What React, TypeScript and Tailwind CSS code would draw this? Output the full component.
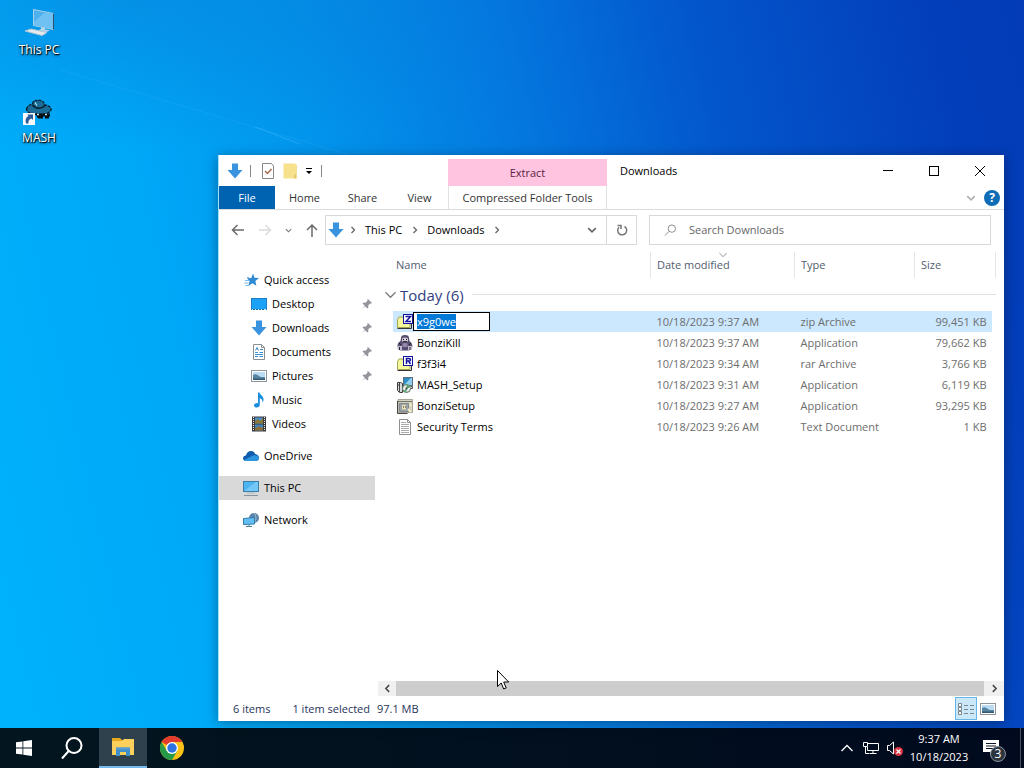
import React, { useEffect, useRef } from "react";

function DownArrow({ className = "h-4 w-4" }) {
  return (
    <svg viewBox="0 0 16 16" className={className}>
      <path d="M5 .5h6V7h4.500L8 15.500.5 7H5z" fill="#3a93de" />
    </svg>
  );
}

function Star() {
  return (
    <svg viewBox="0 0 16 16" className="h-4 w-4">
      <path d="M9 1.500l1.500 4.200 4.500.2-3.600 3 .9 4.900-3.800-2.600-4.200 2.900 1.300-4.900L3 6.300l4.300-.4z" fill="#2f8ad4" />
      <path d="M1 8.500h4.500M.5 11h4M1.500 13.500h3M3 5.500h2" stroke="#74bbee" />
    </svg>
  );
}

function DesktopIcon() {
  return (
    <svg viewBox="0 0 16 16" className="h-4 w-4">
      <rect x=".5" y="2.500" width="15" height="11" fill="#1ba1f6" stroke="#1f7fc6" />
      <path d="M1 13.500h14" stroke="#1466a8" />
      <path d="M1 13.500h1M4 13.500h1M7 13.500h1M10 13.500h1M13 13.500h2" stroke="#d8eefb" />
    </svg>
  );
}

function DocumentIcon() {
  return (
    <svg viewBox="0 0 16 16" className="h-4 w-4">
      <path d="M2.500.5h8l3 3v12h-11z" fill="#fff" stroke="#8a8f94" />
      <path d="M10.500.5v3h3" fill="none" stroke="#8a8f94" />
      <path d="M4.500 6.500l1.500-3 1.500 3M9 5.500h3M4 8.500h3M8.500 8.500h3.500M4 10.500h8M4 12.500h3M8.500 12.500h3.500" fill="none" stroke="#3b8ed0" />
    </svg>
  );
}

function PictureIcon() {
  return (
    <svg viewBox="0 0 16 16" className="h-4 w-4">
      <rect x=".5" y="2.500" width="15" height="11" fill="#fff" stroke="#8c9399" />
      <rect x="2" y="4" width="12" height="8" fill="#b9dcf2" />
      <path d="M2 7c2-1.500 4-.5 6 1s4 1 6 1v3H2z" fill="#5585a3" />
      <path d="M2 10.500h12V12H2z" fill="#35586f" />
    </svg>
  );
}

function MusicIcon() {
  return (
    <svg viewBox="0 0 16 16" className="h-4 w-4">
      <path d="M7 .5h1.500c.3 2.500 4.500 3.500 4 7.500-.1 1-.6 2-1.300 2.500.7-2.500-.7-3.700-2.400-4.300V13c0 1.500-1.300 2.500-3 2.500s-2.800-.8-2.800-2.100S4.500 11 6 11c.4 0 .7 0 1 .2z" fill="#1c8ee0" />
    </svg>
  );
}

function VideoIcon() {
  return (
    <svg viewBox="0 0 16 16" className="h-4 w-4">
      <path d="M1 .5h14v15H1z" fill="#3a3a3a" />
      <path d="M2.500 1v14M13.500 1v14" stroke="#eee" strokeDasharray="1 1" />
      <path d="M4 1.500h8v6H4z" fill="#4f8fd0" />
      <path d="M4 5l3-2 2 2 3-3v5.500H4z" fill="#8a7a35" />
      <path d="M4 8.500h8v6H4z" fill="#3f86c8" />
      <path d="M4 12l4-2 4 2v2.500H4z" fill="#8b6f3c" />
    </svg>
  );
}

function CloudIcon() {
  return (
    <svg viewBox="0 0 16 16" className="h-4 w-4">
      <path d="M3 7.500C3.500 4.500 5.500 3 8 3c2 0 3.500 1 4.200 3 2 .3 3.800 1.500 3.800 3.700 0 2-1.500 3.300-3.500 3.300h-9C1.500 13 0 12 0 10.300S1.300 7.600 3 7.500z" fill="#0f5cad" />
      <path d="M1 12l9-4.500c2.500-.8 6 .2 6 2.500 0 1.800-1.500 3-3.500 3h-9C2.300 13 1.500 12.700 1 12z" fill="#2b95e0" />
    </svg>
  );
}

function MonitorIcon() {
  return (
    <svg viewBox="0 0 16 16" className="h-4 w-4">
      <rect x=".5" y="1.500" width="15" height="10" fill="#4db4f2" stroke="#3c7ea8" />
      <path d="M1 11L13 2h2v9z" fill="#74c8f7" />
      <path d="M4 13h8" stroke="#a9b8c2" />
      <path d="M1 15.500h14" stroke="#87939b" />
    </svg>
  );
}

function NetworkIcon() {
  return (
    <svg viewBox="0 0 16 16" className="h-4 w-4">
      <circle cx="11" cy="6" r="5" fill="#5b84a8" />
      <path d="M11 1q4 5 0 10" stroke="#9dbdd6" fill="none" />
      <path d="M.5 6.500l11-1v6.500l-11 .5z" fill="#62bff2" stroke="#2f7cae" />
      <path d="M3 14.500h6M6 12.500v2" stroke="#4b7f9f" />
    </svg>
  );
}

function Pin() {
  return (
    <svg viewBox="0 0 12 12" className="h-3 w-3">
      <path d="M7 1l4 4-1 .8-.8-.2-2 2 .2 1.900-1 1L4 8.200.8 11.200 3.800 7.800 1.500 5.500l1-1 2 .2 2-2L6.200 1.800z" fill="#92969b" />
    </svg>
  );
}

function Chevron({ dir = "right", className = "h-2 w-2 text-[#666]" }) {
  const paths = { right: "M2.500 1l3 3-3 3", left: "M5.500 1l-3 3 3 3", down: "M1 2.500l3 3 3-3", up: "M1 5.500l3-3 3 3" };
  return (
    <svg viewBox="0 0 8 8" className={className} fill="none" stroke="currentColor" strokeWidth="1.300">
      <path d={paths[dir]} />
    </svg>
  );
}

function ThinChevron({ dir = "down", className }) {
  return (
    <svg viewBox="0 0 12 8" className={className} fill="none" stroke="currentColor" strokeWidth="1.300">
      <path d={dir === "down" ? "M.5 1L6 6.500 11.500 1" : "M.5 7L6 1.500 11.500 7"} />
    </svg>
  );
}

function ArchiveIcon({ kind }) {
  return (
    <svg viewBox="0 0 16 16" className="h-4 w-4">
      <path d="M.5 5.500L2 3h4l1 1.500h6V13.500H.5z" fill="#f4f79a" stroke="#a3a455" />
      <path d="M.5 14.500h14V10" fill="none" stroke="#333" />
      <rect x="6.500" y=".5" width="9" height="9" fill="#fff" stroke="#1414a0" />
      <path
        d={kind === "zip" ? "M8.500 2.500h5L9 7.500h5" : "M9.500 8V2.500h2.500q1.500 0 1.500 1.200T12 5H9.500M11.500 5l2 3"}
        fill="none"
        stroke="#1414a0"
        strokeWidth="1.500"
      />
    </svg>
  );
}

function GorillaIcon() {
  return (
    <svg viewBox="0 0 16 16" className="h-4 w-4">
      <path d="M4 3q0-3 4-3t4 3l.5 3q3 2 3 5l-1 3.500-3 1H4l-3-1L.5 11q0-3.500 3-5z" fill="#564c6e" />
      <path d="M5 3.500q3-2 6 0v3H5z" fill="#d2ccdc" />
      <path d="M6 4h1v1H6zM9 4h1v1H9zM6 6h4v.7H6z" fill="#111" />
      <path d="M5.500 8.500q2.500-1 5 0V12h-5z" fill="#9589ad" />
      <path d="M1 11h4v4H1zM11 11h4v4h-4z" fill="#c3bbd0" />
      <path d="M2.500 12v3M13 12v3M2 8l2 2M14 8l-2 2" stroke="#2b2438" />
    </svg>
  );
}

function SetupIcon() {
  return (
    <svg viewBox="0 0 16 16" className="h-4 w-4">
      <rect x="6.500" y=".5" width="9" height="8" fill="#8ed0ef" stroke="#5c6e80" />
      <path d="M7 8l7-7H7z" fill="#2f8fc4" />
      <path d="M.5 5.500h3l2 1v9h-3l-2-2z" fill="#d7dadb" stroke="#3c3c3c" />
      <path d="M2.500 6v9M1 8h1" stroke="#444" />
      <circle cx="9.500" cy="11.500" r="4" fill="#e6efe9" stroke="#55705c" />
      <path d="M9.500 7.500a4 4 0 0 1 3.500 3l-3.500 1zM9.500 11.500l-3 2.500 3 1.500z" fill="#57a26d" />
      <circle cx="9.500" cy="11.500" r="1" fill="#333" />
      <path d="M13.500 9.500h2v2h-2" stroke="#555" fill="#ccc" />
    </svg>
  );
}

function BonziSetupIcon() {
  return (
    <svg viewBox="0 0 16 16" className="h-4 w-4">
      <path d="M1 1.500h14.500v13H1z" fill="#d3d1bf" stroke="#a5a496" />
      <path d="M1 3.500h14" stroke="#77776a" />
      <path d="M.5 3v12.500h10" fill="none" stroke="#444" />
      <path d="M2.500 5.500h9v8h-9z" fill="#99a2ab" stroke="#84888f" />
      <path d="M5 7.500q2-2 4 0v4H5z" fill="#e8e0b0" />
      <path d="M6 9h1M8 9h1" stroke="#333" />
      <path d="M11 11l3 3M12.500 6l2 2" stroke="#f1edc0" strokeWidth="2" />
    </svg>
  );
}

function TextIcon() {
  return (
    <svg viewBox="0 0 16 16" className="h-4 w-4">
      <path d="M2.500.5h8l3 3v12h-11z" fill="#fff" stroke="#8f8f8f" />
      <path d="M10.500.5v3h3" fill="none" stroke="#8f8f8f" />
      <path d="M4 3.500h5M4 5.500h8M4 7.500h8M4 9.500h8M4 11.500h8M4 13.500h8" stroke="#aaa" />
    </svg>
  );
}

const pinned = [
  { name: "Desktop", icon: <DesktopIcon />, pin: true },
  { name: "Downloads", icon: <DownArrow />, pin: true },
  { name: "Documents", icon: <DocumentIcon />, pin: true },
  { name: "Pictures", icon: <PictureIcon />, pin: true },
  { name: "Music", icon: <MusicIcon />, pin: false },
  { name: "Videos", icon: <VideoIcon />, pin: false },
];

const files = [
  { name: "x9g0we", date: "10/18/2023 9:37 AM", type: "zip Archive", size: "99,451 KB", icon: <ArchiveIcon kind="zip" />, selected: true },
  { name: "BonziKill", date: "10/18/2023 9:37 AM", type: "Application", size: "79,662 KB", icon: <GorillaIcon /> },
  { name: "f3f3i4", date: "10/18/2023 9:34 AM", type: "rar Archive", size: "3,766 KB", icon: <ArchiveIcon kind="rar" /> },
  { name: "MASH_Setup", date: "10/18/2023 9:31 AM", type: "Application", size: "6,119 KB", icon: <SetupIcon /> },
  { name: "BonziSetup", date: "10/18/2023 9:27 AM", type: "Application", size: "93,295 KB", icon: <BonziSetupIcon /> },
  { name: "Security Terms", date: "10/18/2023 9:26 AM", type: "Text Document", size: "1 KB", icon: <TextIcon /> },
];

function DesktopIcons() {
  return (
    <div className="flex w-[78px] flex-col gap-7 pt-2 text-[12px] text-white">
      <button className="flex h-[60px] flex-col items-center gap-1">
        <svg viewBox="0 0 32 30" className="h-[30px] w-8">
          <path d="M10.500 1.500l20 4v16l-20-4z" fill="#4fb0ee" stroke="#a9cfe6" />
          <path d="M11 14L22 4.200l8 1.700v15l-19-3.800z" fill="#6fc0f3" />
          <path d="M30.500 5.500v16" stroke="#2f5068" />
          <path d="M18 19l4 1v1.500l5 .8-4 2-8-1.800 3-1.500z" fill="#b5d6ea" />
          <path d="M2 23l6-2 16 3.500-5 3z" fill="#e4ebef" stroke="#b3c6d3" />
        </svg>
        <span className="[text-shadow:1px_1px_1px_#000,0_1px_3px_#000]">This PC</span>
      </button>
      <button className="flex h-[60px] flex-col items-center gap-1">
        <svg viewBox="0 0 32 30" className="h-[30px] w-8">
          <path d="M3.500 13c1-3 3-4 6-5 .5-3 3-4.500 5-3 1-1 3-1 4 0 2 .5 3 2 3 4 4 .5 7 2 6.500 5-1 3-6 4.500-12 4.500S3.500 17 3.500 13z" fill="#1b6c97" stroke="#071c2c" strokeWidth="1.300" strokeDasharray="3 1" />
          <path d="M9.500 9c3 4 9 4.500 12.500.5" fill="none" stroke="#071c2c" strokeWidth="1.500" />
          <path d="M12 17.500h15v3h-1v2h-4v-2h-2v2h-5z" fill="#0b0f14" />
          <path d="M12 6.500l2 3M14 18.500h2M22 18.500h2" stroke="#b6e4f4" strokeWidth="1.300" />
          <path d="M0 17h12v12H0z" fill="#f6f8fa" />
          <path d="M3 27.500c-1-4 0-6.500 2.500-7.500L4.500 18.500H10V24l-1.500-1.500C6 23.500 5 25 5.500 27.500z" fill="#2a5a98" />
        </svg>
        <span className="[text-shadow:1px_1px_1px_#000,0_1px_3px_#000]">MASH</span>
      </button>
    </div>
  );
}

function TitleBar() {
  return (
    <header className="shrink-0 border-b border-[#dadbdc]">
      <div className="flex h-[31px]">
        <div className="flex w-[229px] shrink-0 items-center pl-2">
          <DownArrow />
          <span className="ml-[7px] h-3 w-px bg-[#888]" />
          <button aria-label="Properties" className="ml-[10px]">
            <svg viewBox="0 0 14 16" className="h-4 w-[14px]">
              <path d="M1.500.5h9l2 2.500v12.500h-11z" fill="#fff" stroke="#888" />
              <path d="M4 8l2.500 2.500L10.500 6" fill="none" stroke="#a9694f" strokeWidth="1.500" />
            </svg>
          </button>
          <button aria-label="New folder" className="ml-2">
            <svg viewBox="0 0 14 16" className="h-4 w-[14px]">
              <path d="M.5.500h11l2 1v14H.5z" fill="#f8e18c" />
              <path d="M13 2v9l-2 1v3.500h2.500V2z" fill="#e7c96a" />
            </svg>
          </button>
          <button aria-label="Customize Quick Access Toolbar" className="ml-2">
            <svg viewBox="0 0 8 8" className="h-2 w-2">
              <path d="M1 1.500h6" stroke="#000" />
              <path d="M1 4h6L4 7z" />
            </svg>
          </button>
          <span className="ml-2 h-3 w-px bg-[#888]" />
        </div>
        <div className="mt-1 w-[159px] shrink-0 bg-[#ffc4e0] text-center leading-7 text-[#5b1f42]">Extract</div>
        <h1 className="flex-1 pl-[13px] leading-8 text-black">Downloads</h1>
        <div className="mr-px flex">
          <button aria-label="Minimize" className="flex w-[46px] items-center justify-center">
            <span className="h-px w-[10px] bg-black" />
          </button>
          <button aria-label="Maximize" className="flex w-[46px] items-center justify-center">
            <span className="h-[10px] w-[10px] border border-black" />
          </button>
          <button aria-label="Close" className="flex w-[46px] items-center justify-center">
            <svg viewBox="0 0 10 10" className="h-[10px] w-[10px]" stroke="#000">
              <path d="M0 0l10 10M10 0L0 10" />
            </svg>
          </button>
        </div>
      </div>
      <nav className="flex h-[23px] items-stretch text-[#333]">
        <button className="w-14 bg-[#0063b1] text-white">File</button>
        <button className="w-[59px]">Home</button>
        <button className="w-[57px]">Share</button>
        <button className="w-[57px]">View</button>
        <button className="w-[159px] border-x border-[#e4dfe2] whitespace-nowrap">Compressed Folder Tools</button>
        <div className="ml-auto flex items-center gap-2 pr-1">
          <Chevron dir="down" className="h-[10px] w-[10px] text-[#b0b0b0]" />
          <button aria-label="Help" className="h-4 w-4 rounded-full bg-[#0f6cb6] text-[12px] leading-4 font-bold text-white">?</button>
        </div>
      </nav>
    </header>
  );
}

function AddressBar() {
  return (
    <div className="flex shrink-0 items-center pt-[5px] pr-[13px] pl-3 text-black">
      <div className="flex w-[94px] items-center justify-between pr-[6px]">
        <button aria-label="Back">
          <svg viewBox="0 0 14 14" className="h-[14px] w-[14px]" fill="none" stroke="#6a6a6a" strokeWidth="1.500">
            <path d="M13 7H2M6.500 2L1.500 7l5 5" />
          </svg>
        </button>
        <button aria-label="Forward">
          <svg viewBox="0 0 14 14" className="h-[14px] w-[14px]" fill="none" stroke="#dcdcdc" strokeWidth="1.500">
            <path d="M1 7h11M7.500 2l5 5-5 5" />
          </svg>
        </button>
        <button aria-label="Recent locations">
          <Chevron dir="down" className="h-[7px] w-[7px] text-[#777]" />
        </button>
        <button aria-label="Up">
          <svg viewBox="0 0 14 14" className="h-[14px] w-[14px]" fill="none" stroke="#6a6a6a" strokeWidth="1.500">
            <path d="M7 14V2M2 7l5-5 5 5" />
          </svg>
        </button>
      </div>
      <div className="flex h-[30px] w-[312px] shrink-0 items-center border border-[#d9d9d9]">
        <span className="ml-[2px]"><DownArrow className="h-[18px] w-4" /></span>
        <span className="ml-[5px]"><Chevron /></span>
        <button className="ml-2">This PC</button>
        <span className="ml-[9px]"><Chevron /></span>
        <button className="ml-2">Downloads</button>
        <span className="ml-2"><Chevron /></span>
        <button aria-label="Previous locations" className="mr-[9px] ml-auto">
          <Chevron dir="down" className="h-[10px] w-[10px] text-[#666]" />
        </button>
        <button aria-label="Refresh" className="flex h-full w-[30px] items-center justify-center border-l border-[#d9d9d9]">
          <svg viewBox="0 0 12 12" className="h-3 w-3" fill="none" stroke="#777" strokeWidth="1.500">
            <path d="M8.500 2.500A4.500 4.500 0 1 1 3 3.200M1.500 1.500h3.500v3.500" />
          </svg>
        </button>
      </div>
      <label className="ml-3 flex h-[30px] flex-1 items-center border border-[#d9d9d9] pl-[14px]">
        <svg viewBox="0 0 14 14" className="mr-3 h-[14px] w-[14px]" fill="none" stroke="#888">
          <circle cx="8.500" cy="5.500" r="4" />
          <path d="M5.500 8.500L1 13" />
        </svg>
        <input aria-label="Search Downloads" placeholder="Search Downloads" className="w-full bg-transparent outline-none placeholder:text-[#666]" />
      </label>
    </div>
  );
}

function Sidebar() {
  return (
    <aside className="w-[156px] shrink-0 pt-4 text-black">
      <button className="flex h-6 w-full items-center gap-1 pl-[25px]"><Star />Quick access</button>
      {pinned.map((item) => (
        <button key={item.name} className="flex h-6 w-full items-center gap-[5px] pr-[2px] pl-8">
          {item.icon}
          {item.name}
          {item.pin && <span className="ml-auto"><Pin /></span>}
        </button>
      ))}
      <button className="mt-2 flex h-6 w-full items-center gap-[5px] pl-6"><CloudIcon />OneDrive</button>
      <button className="mt-2 flex h-6 w-full items-center gap-[5px] bg-[#d9d9d9] pl-6"><MonitorIcon />This PC</button>
      <button className="mt-2 flex h-6 w-full items-center gap-[5px] pl-6"><NetworkIcon />Network</button>
    </aside>
  );
}

function FileTable() {
  const rename = useRef<HTMLInputElement>(null);

  useEffect(() => {
    rename.current?.focus();
    rename.current?.select();
  }, []);

  return (
    <table className="w-full table-fixed border-collapse text-[#6d6d6d]">
      <colgroup>
        <col />
        <col className="w-36" />
        <col className="w-[120px]" />
        <col className="w-[77px]" />
        <col className="w-1" />
      </colgroup>
      <thead>
        <tr className="h-[26px] text-left text-[#53606e]">
          <th className="pl-[3px] font-normal">Name</th>
          <th className="relative border-l border-[#e5e5e5] pl-[6px] font-normal">
            <span className="absolute top-0 left-[68px]"><ThinChevron className="h-[6px] w-2 text-[#888]" /></span>
            Date modified
          </th>
          <th className="border-l border-[#e5e5e5] pl-[6px] font-normal">Type</th>
          <th colSpan={2} className="border-x border-[#e5e5e5] pl-[6px] font-normal">Size</th>
        </tr>
      </thead>
      <tbody>
        <tr className="h-[33px]">
          <td colSpan={5}>
            <button className="-ml-2 flex w-full items-center text-[15px] text-[#33417f]">
              <ThinChevron className="mr-1 h-2 w-[11px] text-[#777]" />
              Today (6)
              <span className="-mr-2 ml-2 h-px flex-1 bg-[#e2e2e2]" />
            </button>
          </td>
        </tr>
        {files.map((file) => (
          <tr key={file.name} className="h-[21px]">
            <td className={file.selected ? "bg-[#cce8ff] pl-1" : "pl-1"}>
              <div className="flex items-center">
                {file.icon}
                {file.selected ? (
                  <input
                    ref={rename}
                    aria-label="File name"
                    defaultValue={file.name}
                    className="h-[19px] w-[77px] border border-black bg-white pl-[3px] text-black caret-transparent outline-none selection:bg-[#0078d7] selection:text-white"
                  />
                ) : (
                  <span className="ml-1 text-black">{file.name}</span>
                )}
              </div>
            </td>
            <td className={file.selected ? "bg-[#cce8ff] pl-[6px]" : "pl-[6px]"}>{file.date}</td>
            <td className={file.selected ? "bg-[#cce8ff] pl-[6px]" : "pl-[6px]"}>{file.type}</td>
            <td className={file.selected ? "bg-[#cce8ff] pr-[5px] text-right" : "pr-[5px] text-right"}>{file.size}</td>
            <td />
          </tr>
        ))}
      </tbody>
    </table>
  );
}

function ExplorerWindow() {
  return (
    <main className="absolute top-[155px] right-5 bottom-[7px] left-[218px] flex flex-col border-l border-[#9fe3fb] bg-white shadow-[0_2px_12px_rgba(0,0,0,0.35)]">
      <TitleBar />
      <AddressBar />
      <div className="flex min-h-0 flex-1 pt-[7px]">
        <Sidebar />
        <section className="ml-[3px] flex min-w-0 flex-1 flex-col">
          <div className="flex-1 pr-2 pl-[15px]">
            <FileTable />
          </div>
          <div className="flex h-[15px] items-center bg-[#f0f0f0]">
            <button aria-label="Scroll left" className="flex w-[18px] justify-center">
              <Chevron dir="left" className="h-[9px] w-[9px] text-[#444]" />
            </button>
            <span className="h-full flex-1 bg-[#cdcdcd]" />
            <button aria-label="Scroll right" className="flex w-5 justify-center">
              <Chevron dir="right" className="h-[9px] w-[9px] text-[#444]" />
            </button>
          </div>
        </section>
      </div>
      <footer className="flex h-[25px] shrink-0 items-center pr-[5px] pl-[14px] text-[#28345a]">
        <span>6 items</span>
        <span className="ml-[22px]">1 item selected</span>
        <span className="ml-[7px]">97.1 MB</span>
        <button aria-label="Details view" className="ml-auto flex h-[23px] w-[22px] items-center justify-center border border-[#66b7e8] bg-[#cbe8f9]">
          <svg viewBox="0 0 16 14" className="h-[14px] w-4" fill="none" stroke="#7a858d">
            <path d="M.5 1.500h3v3h-3zM.5 5.500h3v3h-3zM.5 9.500h3v3h-3z" fill="#fff" />
            <path d="M6 3.500h4M12 3.500h4M6 7.500h4M12 7.500h4M6 11.500h4M12 11.500h4" />
          </svg>
        </button>
        <button aria-label="Large icons view" className="flex w-[22px] justify-center"><PictureIcon /></button>
      </footer>
    </main>
  );
}

function Taskbar() {
  return (
    <div className="flex h-10 shrink-0 bg-linear-to-r from-[#03161f] to-[#010a1e] text-white">
      <button aria-label="Start" className="flex w-12 items-center justify-center">
        <svg viewBox="0 0 16 16" className="h-4 w-4" fill="#fff">
          <path d="M0 2.300l6.500-.9v6.200H0zM7.300 1.300L16 0v7.600H7.300zM0 8.400h6.500v6.200L0 13.700zM7.300 8.400H16V16l-8.700-1.200z" />
        </svg>
      </button>
      <button aria-label="Search" className="flex w-12 items-center justify-center">
        <svg viewBox="0 0 24 24" className="h-6 w-6" fill="none" stroke="#fff" strokeWidth="2">
          <circle cx="14" cy="9.500" r="7.500" />
          <path d="M8.700 15L2 22.500" />
        </svg>
      </button>
      <button aria-label="File Explorer" className="ml-[3px] flex w-12 items-center justify-center border-b-2 border-[#76b9ed] bg-[#2e414c]">
        <svg viewBox="0 0 24 20" className="h-5 w-6">
          <path d="M1 1h8l2 2h12v15H1z" fill="#e6a81f" />
          <path d="M1 4h10l2-2h10v16H1z" fill="#fdd05c" />
          <path d="M5 10.500h14V19h-4v-4H9v4H5z" fill="#3f8fcb" />
          <path d="M5 10.500h14v2H5z" fill="#5a9dcf" />
        </svg>
      </button>
      <button aria-label="Google Chrome" className="ml-px flex w-12 items-center justify-center">
        <svg viewBox="0 0 24 24" className="h-6 w-6">
          <circle cx="12" cy="12" r="12" fill="#fbc116" />
          <path d="M12 12L1.600 6A12 12 0 0 1 22.400 6H12z" fill="#e33b2e" />
          <path d="M1.600 6A12 12 0 0 0 12 24l5.200-9L12 12 6.800 15z" fill="#269a49" />
          <circle cx="12" cy="12" r="6" fill="#fff" />
          <circle cx="12" cy="12" r="4.700" fill="#2d74e0" />
        </svg>
      </button>
      <div className="ml-auto flex items-center">
        <button aria-label="Show hidden icons">
          <ThinChevron dir="up" className="h-2 w-3" />
        </button>
        <svg viewBox="0 0 18 16" className="ml-[9px] h-4 w-[18px]" fill="none" stroke="#fff">
          <path d="M6 3.500h10.500v7H5.500V7M11 10.500v3M7.500 13.500h7M1.500 2.500h4v4h-4zM3.500 6.500v7H7" />
        </svg>
        <svg viewBox="0 0 18 16" className="ml-[6px] h-4 w-[18px]">
          <path d="M1.500 5.500h2l4-3.500v12l-4-3.500h-2z" fill="none" stroke="#fff" />
          <circle cx="12.500" cy="11.500" r="4.500" fill="#d9333f" />
          <path d="M10.500 9.500l4 4M14.500 9.500l-4 4" stroke="#fff" strokeWidth="1.300" />
        </svg>
        <div className="ml-[5px] w-[60px] text-center leading-[18px] whitespace-nowrap">
          9:37 AM
          <br />
          10/18/2023
        </div>
        <button aria-label="Notifications" className="relative ml-[13px] h-6 w-6">
          <svg viewBox="0 0 24 24" className="h-6 w-6">
            <path d="M1 4h16v12h-6l-3 4v-4H1z" fill="#fff" />
            <path d="M4 7.500h10M4 10h10M4 12.500h7" stroke="#0a1525" />
          </svg>
          <span className="absolute top-[10px] left-2 h-4 w-4 rounded-full border border-[#8b9199] bg-[#2c3440] text-[12px] leading-[14px]">3</span>
        </button>
        <span className="ml-[14px] h-10 w-1 border-l border-[#4a5460]" />
      </div>
    </div>
  );
}

export default function App() {
  return (
    <div className="flex h-screen flex-col overflow-hidden font-['Open_Sans','Noto_Sans',sans-serif] text-[11px] leading-4 select-none">
      <div className="relative min-h-0 flex-1 bg-[radial-gradient(ellipse_420px_150px_at_12%_0%,rgba(8,120,210,0.45),transparent),linear-gradient(77deg,#00b2fb_0%,#00a8f8_22%,#0294ec_38%,#0476de_56%,#0356cc_72%,#033eba_92%,#033cb6_100%)]">
        {/* light rays of the wallpaper */}
        <svg viewBox="0 0 400 170" className="absolute top-0 left-0 h-[170px] w-[400px]">
          <path d="M60 70L360 158" stroke="#5cc4ff" strokeOpacity=".15" />
          <path d="M255 127L300 144" stroke="#7fd0ff" strokeOpacity=".25" />
        </svg>
        <DesktopIcons />
        <ExplorerWindow />
        <svg viewBox="0 0 12 20" className="absolute top-[670px] left-[497px] h-5 w-3">
          <path d="M.5.5v16l3.700-3.500 2.500 6 2.500-1-2.500-6h5z" fill="#fff" stroke="#000" />
        </svg>
      </div>
      <Taskbar />
    </div>
  );
}
